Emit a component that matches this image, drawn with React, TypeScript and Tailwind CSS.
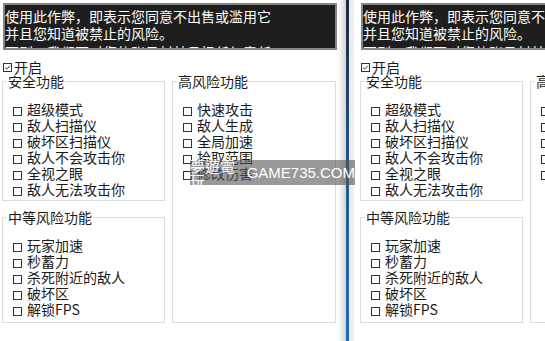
import React from 'react';

const safeItems = ['超级模式', '敌人扫描仪', '破坏区扫描仪', '敌人不会攻击你', '全视之眼', '敌人无法攻击你'];
const highItems = ['快速攻击', '敌人生成', '全局加速', '拾取范围', '修改伤害'];
const midItems = ['玩家加速', '秒蓄力', '杀死附近的敌人', '破坏区', '解锁FPS'];

function Box({ checked = false }: { checked?: boolean }) {
  return (
    <svg width="9" height="9" viewBox="0 0 9 9" className="shrink-0">
      <rect x="0.5" y="0.5" width="8" height="8" fill="none" stroke="#333" strokeWidth="1" />
      {checked && <path d="M2 4.6 L3.7 6.2 L7 2.6" fill="none" stroke="#333" strokeWidth="1" />}
    </svg>
  );
}

function Group({ title, items, className = '' }: { title: string; items: string[]; className?: string }) {
  return (
    <fieldset className={`border border-[#dcdcdc] pl-[4px] pb-[3px] ${className}`}>
      <legend className="px-[1px] text-[14px] leading-[16px] text-[#1a1a1a]">{title}</legend>
      <div className="pt-[12px] pl-[6px]">
        {items.map(item => (
          <div key={item} className="flex items-start gap-[5px] h-[16px] text-[14px] leading-[16px] text-[#1a1a1a] whitespace-nowrap">
            <span className="mt-[6px]"><Box /></span>
            <span>{item}</span>
          </div>
        ))}
      </div>
    </fieldset>
  );
}

function Panel() {
  return (
    <div className="w-[338px] shrink-0 pt-[3px]">
      {/* warning text box */}
      <div className="ml-[3px] w-[334px] h-[47px] border-2 border-[#858585] bg-[#1e1e1e] overflow-hidden pt-[3px] text-white text-[14px] leading-[17px] whitespace-nowrap">
        <div>使用此作弊，即表示您同意不出售或滥用它</div>
        <div>并且您知道被禁止的风险。</div>
        <div className="mt-[2px]">否则，我们不对您的账号封禁承担任何责任。</div>
      </div>

      <div className="mt-[9px] ml-[3px] flex items-start gap-[2px] h-[16px] text-[14px] leading-[16px] text-[#1a1a1a]">
        <span className="mt-[4px]"><Box checked /></span>
        <span>开启</span>
      </div>

      <div className="-mt-[2px] ml-[2px] flex gap-[7px]">
        <div className="w-[163px] flex flex-col">
          <Group title="安全功能" items={safeItems} />
          <Group title="中等风险功能" items={midItems} className="mt-[8px] pb-[5px]" />
        </div>
        <Group title="高风险功能" items={highItems} className="w-[164px]" />
      </div>
    </div>
  );
}

export default function App() {
  return (
    <div
      className="relative w-[545px] h-[341px] overflow-hidden bg-white flex"
      style={{ fontFamily: '"Noto Sans CJK SC", "Noto Sans", sans-serif' }}
    >
      <Panel />

      {/* window edge */}
      <div className="w-[20px] shrink-0 flex">
        <div className="w-[8px] bg-gradient-to-r from-white to-[#d4d4d4]" />
        <div className="w-[3px] bg-gradient-to-b from-[#1b2940] via-[#1f5a96] to-[#1f6cb5]" />
        <div className="w-[5px] bg-[#ededed]" />
        <div className="w-[4px] bg-white" />
      </div>

      <Panel />

      {/* watermark */}
      <div className="absolute left-[190px] top-[160px] w-[165px] h-[25px] bg-[rgba(85,85,85,0.6)] flex items-center justify-center gap-[6px] text-white text-[15px] leading-none">
        <span style={{ fontFamily: '"Noto Sans CJK TC", sans-serif' }}>夢遊電玩</span>
        <span style={{ fontFamily: '"Liberation Sans", sans-serif' }}>GAME735.COM</span>
      </div>
    </div>
  );
}
